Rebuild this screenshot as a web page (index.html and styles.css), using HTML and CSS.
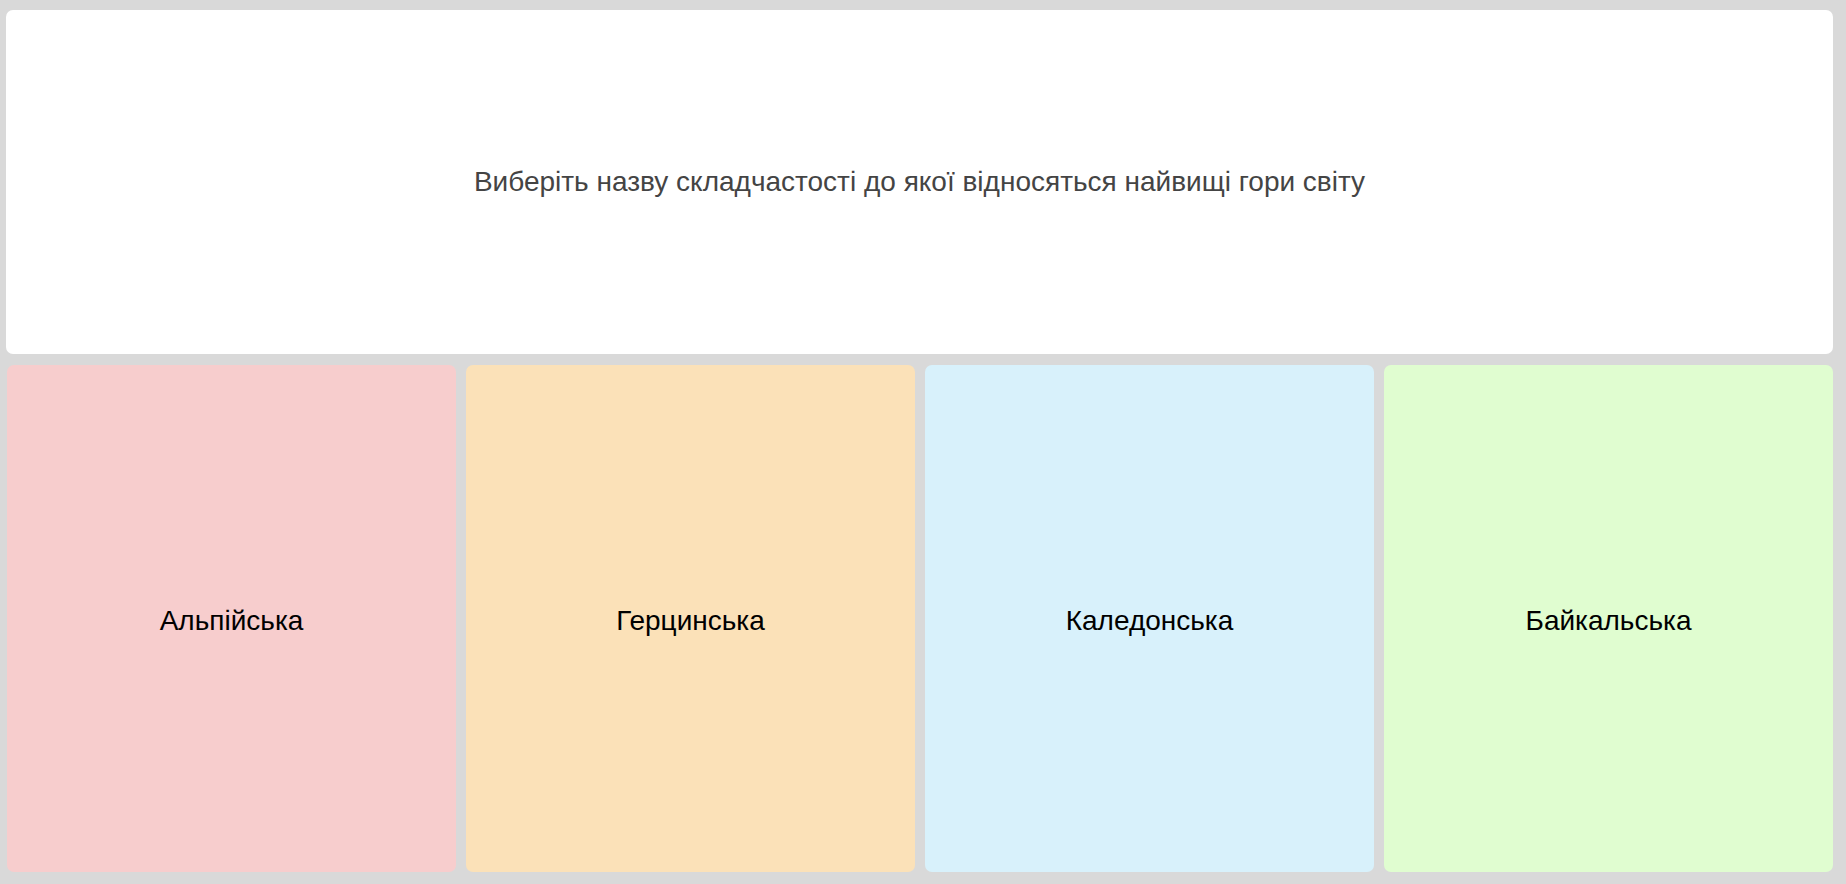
FILE: index.html
```html
<!DOCTYPE html>
<html lang="uk">
<head>
<meta charset="utf-8">
<title>Вправа</title>
<link rel="stylesheet" href="styles.css">
</head>
<body>
<div class="app">
  <div class="question">
    <p class="question-text">Виберіть назву складчастості до якої відносяться найвищі гори світу</p>
  </div>
  <div class="answers">
    <div class="answer answer-red">Альпійська</div>
    <div class="answer answer-orange">Герцинська</div>
    <div class="answer answer-blue">Каледонська</div>
    <div class="answer answer-green">Байкальська</div>
  </div>
</div>
</body>
</html>
```

FILE: styles.css
```css
html, body {
  margin: 0;
  padding: 0;
  height: 100%;
  background: #d9d9d9;
  font-family: "Liberation Sans", Arial, sans-serif;
}

.app {
  box-sizing: border-box;
  height: 884px;
  padding: 10px 13px 12px 6px;
  display: flex;
  flex-direction: column;
  gap: 11px;
}

.question {
  height: 344px;
  flex: none;
  background: #ffffff;
  border-radius: 7px;
  display: flex;
  align-items: center;
  justify-content: center;
}

.question-text {
  margin: 0;
  font-size: 28px;
  color: #444444;
}

.answers {
  flex: 1;
  display: grid;
  grid-template-columns: repeat(4, 1fr);
  gap: 10px;
  padding-left: 1px;
}

.answer {
  border-radius: 7px;
  display: flex;
  align-items: center;
  justify-content: center;
  font-size: 28px;
  color: #000000;
  padding-top: 4px;
}

.answer-red { background: #f7cdcd; }
.answer-orange { background: #fbe1b8; }
.answer-blue { background: #d8f1fb; }
.answer-green { background: #e0fdd0; }
```
